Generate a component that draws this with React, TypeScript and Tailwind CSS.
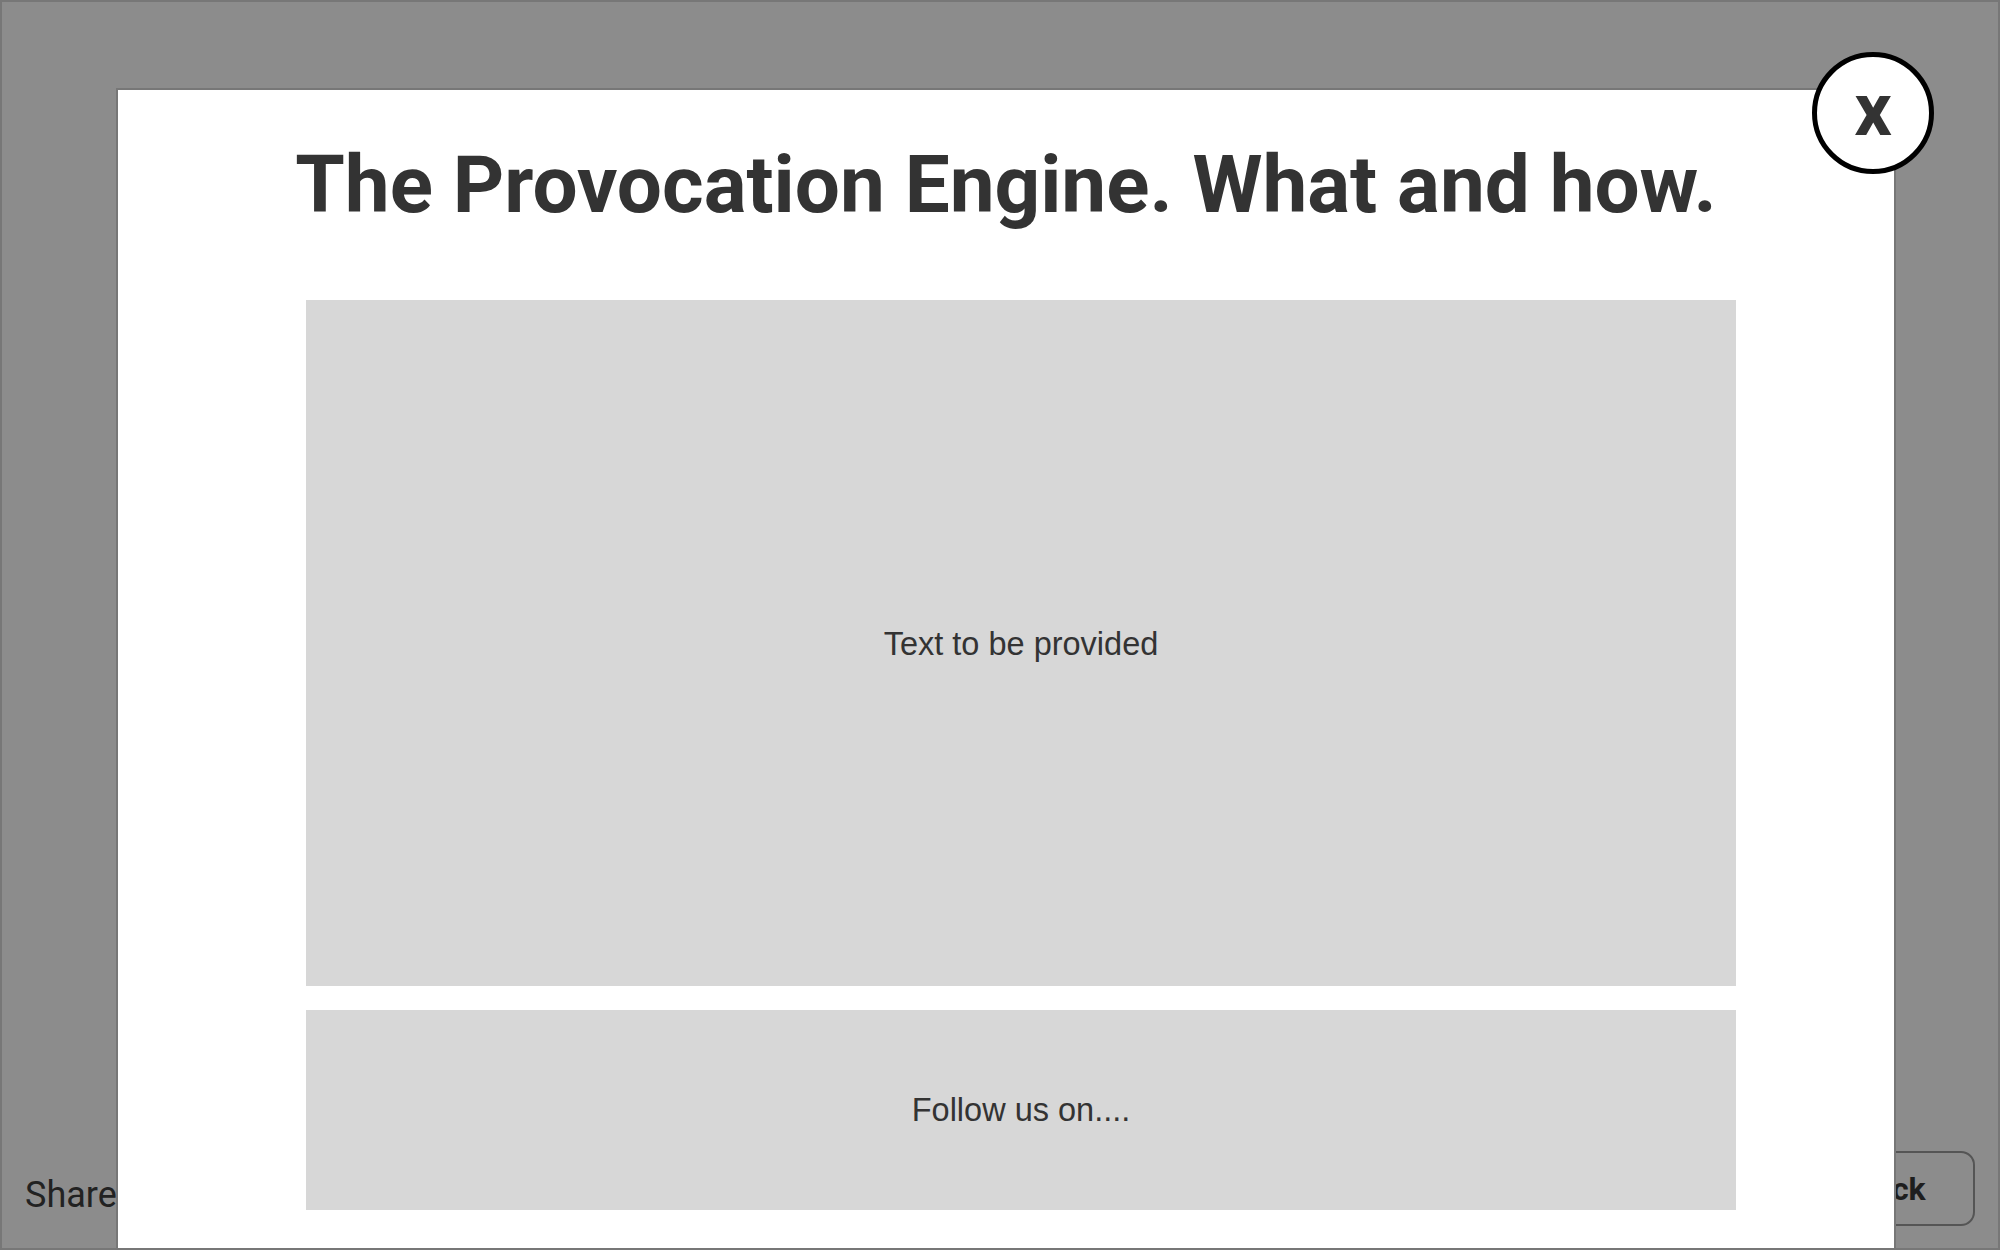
import React from 'react';

export default function App() {
    return (
        <div className="relative w-[2000px] h-[1250px] overflow-hidden border-2 border-[#777777] bg-[#8c8c8c] flex items-end justify-between pl-[23px] pr-[23px] pb-[22px] font-['Roboto',sans-serif]">
            {/* Page underneath the overlay */}
            <span className="mb-[13px] text-[36px] leading-none text-[#222222]">Share</span>
            <button className="h-[75px] w-[170px] rounded-[14px] border-2 border-[#555555] text-[32px] font-bold leading-none text-[#1e1e1e]">
                Back
            </button>

            {/* Modal */}
            <div className="absolute left-[114px] top-[86px] w-[1780px] h-[1300px] border-2 border-[#777777] bg-white">
                <h1 className="pt-[55px] text-center text-[80px] font-bold leading-none text-[#333333]">
                    The Provocation Engine. What and how.
                </h1>
                <div className="ml-[188px] mt-[75px] flex flex-col gap-[24px] w-[1430px] font-['Liberation_Sans',Arial,sans-serif] text-[32.5px] text-[#333333]">
                    <div className="flex h-[686px] items-center justify-center bg-[#d7d7d7] pt-[3px]">
                        Text to be provided
                    </div>
                    <div className="flex h-[200px] items-center justify-center bg-[#d7d7d7] pt-[1px]">
                        Follow us on....
                    </div>
                </div>
            </div>

            {/* Close button */}
            <button className="absolute left-[1810px] top-[50px] flex h-[122px] w-[122px] items-center justify-center rounded-full border-[5px] border-black bg-white pb-[6px] text-[74px] font-bold leading-none text-[#333333]">
                x
            </button>
        </div>
    );
}
